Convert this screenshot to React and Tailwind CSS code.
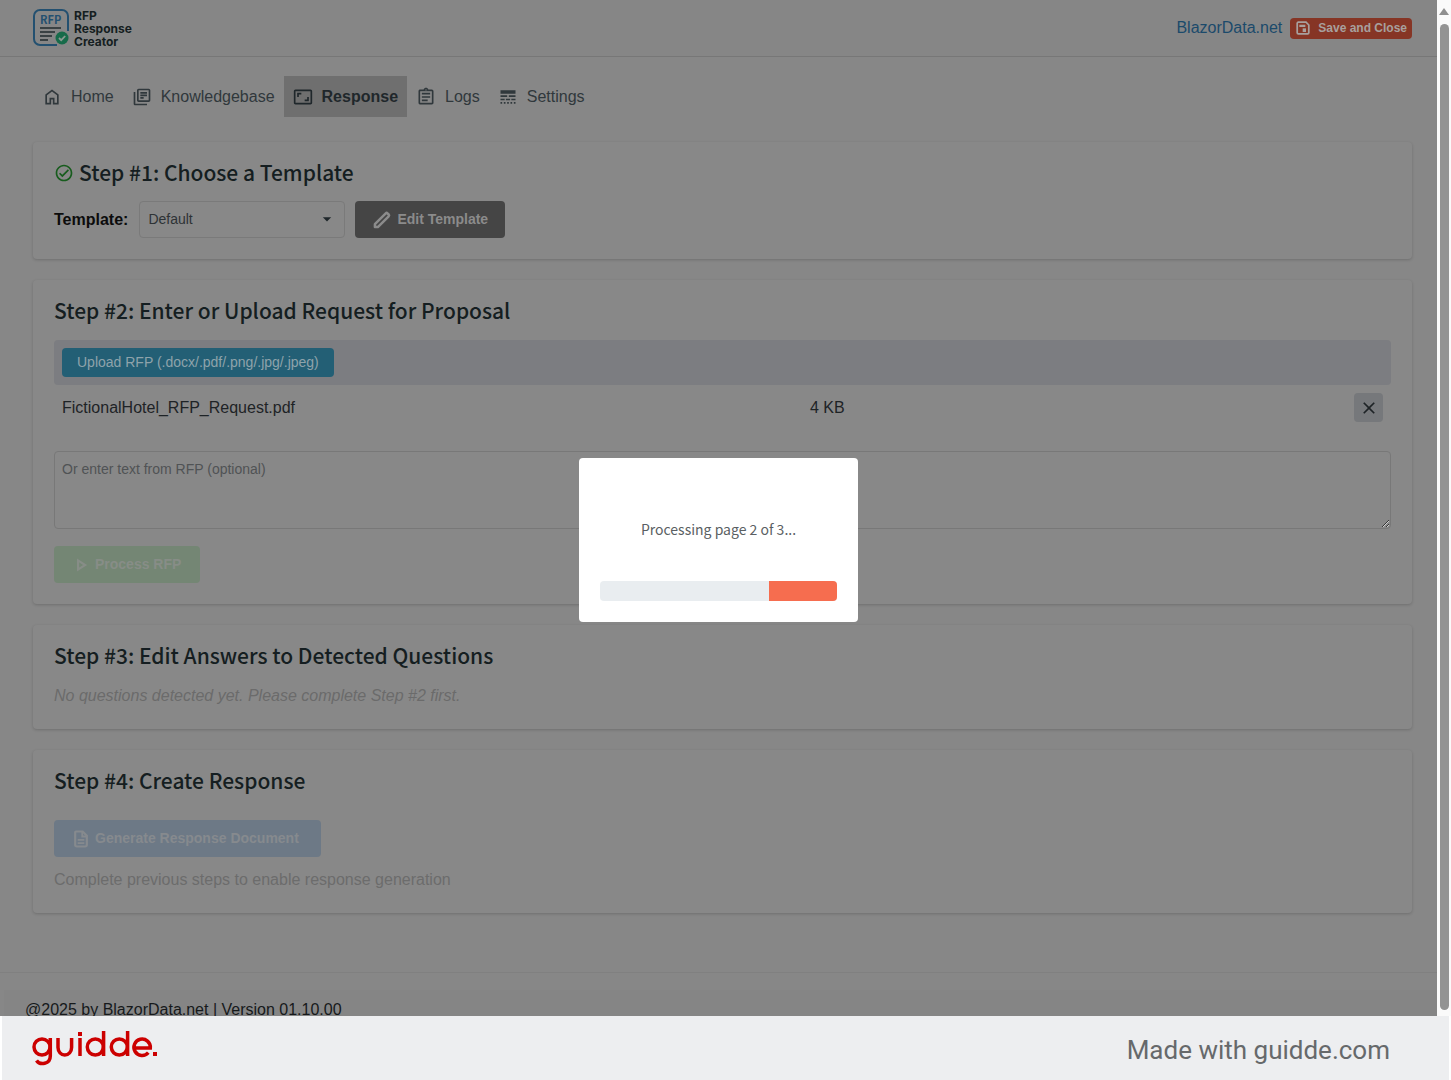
import React from 'react';
import {
    MdOutlineLibraryBooks,
    MdOutlineAspectRatio,
    MdOutlineAssignment,
    MdLineStyle,
    MdOutlineCheckCircle,
    MdClose,
    MdArrowDropDown
} from 'react-icons/md';

const HomeIcon = ({ size = 20 }) => (
    <svg width={size} height={size} viewBox="0 -960 960 960" fill="currentColor" aria-hidden="true">
        <path d="M240-200h120v-240h240v240h120v-360L480-740 240-560v360Zm-80 80v-480l320-240 320 240v480H520v-240h-80v240H160Z" />
    </svg>
);

const SaveIcon = ({ size = 16 }) => (
    <svg width={size} height={size} viewBox="0 0 24 24" fill="none" stroke="currentColor" strokeWidth="2.6" aria-hidden="true">
        <path d="M5 3.300h11.500l4.200 4.200V19a1.700 1.700 0 0 1-1.700 1.700H5A1.700 1.700 0 0 1 3.300 19V5A1.700 1.700 0 0 1 5 3.300z" />
        <path d="M6.500 8.800h9" strokeWidth="3.400" />
        <path d="M11.500 12.500h5v5.500h-5z" fill="currentColor" stroke="none" />
    </svg>
);

const PencilIcon = ({ size = 20 }) => (
    <svg width={size} height={size} viewBox="0 0 24 24" fill="none" stroke="currentColor" strokeWidth="3" strokeLinejoin="round" aria-hidden="true">
        <path d="M3.500 20.500v-3.500L16.500 4a1.500 1.500 0 0 1 2.100 0L20 5.400a1.500 1.500 0 0 1 0 2.100L7 20.500z" />
    </svg>
);

const PlayIcon = ({ size = 20 }) => (
    <svg width={size} height={size} viewBox="0 0 24 24" fill="none" stroke="currentColor" strokeWidth="2.6" aria-hidden="true">
        <path d="M8.500 6.500v11l8.500-5.500z" />
    </svg>
);

const DocumentIcon = ({ size = 20 }) => (
    <svg width={size} height={size} viewBox="0 0 24 24" fill="none" stroke="currentColor" strokeWidth="2.600" aria-hidden="true">
        <path d="M6 3h8l5 5v11a2 2 0 0 1-2 2H7a2 2 0 0 1-2-2V4a1 1 0 0 1 1-1z" />
        <path d="M13.500 3v6H19M8 13h8M8 17h8" strokeWidth="2.200" />
    </svg>
);

const navItems = [
    { name: 'Home', icon: HomeIcon },
    { name: 'Knowledgebase', icon: MdOutlineLibraryBooks },
    { name: 'Response', icon: MdOutlineAspectRatio, active: true },
    { name: 'Logs', icon: MdOutlineAssignment },
    { name: 'Settings', icon: MdLineStyle }
];

const Logo = () => (
    <a href="#home" aria-label="RFP Response Creator" className="flex items-center gap-[5px]">
        <svg width="36" height="38" viewBox="0 0 36 38" fill="none" aria-hidden="true">
            <path d="M24 36H7a6 6 0 0 1-6-6V7a6 6 0 0 1 6-6h22a6 6 0 0 1 6 6v15" stroke="#235070" strokeWidth="2" />
            <text x="7" y="15" fontSize="11" fontWeight="700" fontFamily="Noto Sans CJK SC, sans-serif" fill="#235070">RFP</text>
            <path d="M7 19h21M7 23h15M7 27h12M7 31h8" stroke="#222b2e" strokeWidth="1.6" />
            <circle cx="29" cy="29" r="6.5" fill="#176b4a" />
            <path d="m26 29 2.200 2.200 4-4.200" stroke="#8a9a92" strokeWidth="1.800" />
        </svg>
        <span className="text-[12px] leading-[13px] font-bold text-[#151e21] font-['Inter',sans-serif]">
            RFP<br />Response<br />Creator
        </span>
    </a>
);

const Card = ({ title, done, children }) => (
    <section className="rounded bg-[#888888] px-[21px] pt-[13px] pb-[21px] shadow-[0_1px_3px_rgba(0,0,0,0.18)]">
        <h2 className="flex items-center gap-[5px] text-[21px] leading-[34px] font-medium text-[#151e21] font-['Noto_Sans_CJK_SC',sans-serif]">
            {done && <MdOutlineCheckCircle size={20} className="mt-0.5 text-[#175c1d]" />}
            {title}
        </h2>
        {children}
    </section>
);

const Header = () => (
    <header className="flex h-[57px] items-center justify-between border-b border-[#777777] bg-[#868686] pr-[25px] pl-[33px]">
        <Logo />
        <div className="flex items-center gap-2">
            <a href="#blazordata" className="text-[16px] text-[#1b4a6b]">BlazorData.net</a>
            <button type="button" className="flex h-[21px] items-center gap-[7px] rounded bg-[#863525] px-[5px] text-[12px] font-bold text-[#a8a09e]">
                <SaveIcon />
                Save and Close
            </button>
        </div>
    </header>
);

const Nav = () => (
    <nav className="flex">
        {navItems.map(({ name, icon: Icon, active }) => (
            <a
                key={name}
                href={`#${name.toLowerCase()}`}
                className={`flex h-[41px] items-center gap-[9px] px-[9px] text-[16px] ${active ? 'bg-[#6f6f6f] font-bold text-[#1f272b]' : 'text-[#30383c]'}`}
            >
                <Icon size={20} />
                {name}
            </a>
        ))}
    </nav>
);

const ProgressDialog = () => (
    <div className="fixed inset-0 flex items-center justify-center pr-[14px]">
        <div role="dialog" aria-label="Progress" className="w-[279px] rounded bg-white px-[21px] pt-[59px] pb-[21px] text-center">
            <p className="text-[14px] leading-6 text-[#5a5f63] font-['Noto_Sans_CJK_SC',sans-serif]">Processing page 2 of 3...</p>
            <div className="mt-10 flex h-5 justify-end overflow-hidden rounded bg-[#e9edf0]">
                <div className="w-[68px] bg-[#f66d4f]" />
            </div>
        </div>
    </div>
);

const App = () => (
    <div className="flex h-screen flex-col overflow-hidden bg-white font-['Liberation_Sans',Arial,sans-serif]">
        <div className="flex min-h-0 flex-1">
            <div className="min-w-0 flex-1 overflow-hidden bg-[#878787]">
                <Header />
                <main className="pt-[19px] pr-[25px] pb-[59px] pl-[33px]">
                    <Nav />
                    <div className="mt-[25px] flex flex-col gap-[21px]">
                        <Card title="Step #1: Choose a Template" done>
                            <div className="mt-3 flex items-center">
                                <label htmlFor="template" className="text-[16px] font-bold text-[#0c0c0c]">Template:</label>
                                <div className="relative ml-[11px]">
                                    <select id="template" className="h-[37px] w-[206px] appearance-none rounded border border-[#7a7a7a] px-2 text-[14px] text-[#2e3336]">
                                        <option>Default</option>
                                    </select>
                                    <MdArrowDropDown size={20} className="pointer-events-none absolute top-2 right-2 text-[#1f272b]" />
                                </div>
                                <button type="button" className="ml-[10px] flex h-[37px] items-center gap-[5px] rounded bg-[#454545] px-[17px] text-[14px] font-bold text-[#8b8b8b]">
                                    <PencilIcon />
                                    Edit Template
                                </button>
                            </div>
                        </Card>

                        <Card title="Step #2: Enter or Upload Request for Proposal">
                            <div className="mt-[13px] flex h-[45px] items-center rounded bg-[#7c7d81] px-2">
                                <button type="button" className="h-[29px] rounded bg-[#235f75] px-[15px] text-[14px] text-[#8ea3ab]">
                                    Upload RFP (.docx/.pdf/.png/.jpg/.jpeg)
                                </button>
                            </div>
                            <div className="grid h-[45px] grid-cols-[1fr_573px_29px] items-center px-2 text-[16px] text-[#1e2326]">
                                <span>FictionalHotel_RFP_Request.pdf</span>
                                <span className="pl-[29px]">4 KB</span>
                                <button type="button" aria-label="Remove file" className="flex size-[29px] items-center justify-center rounded bg-[#76787b]">
                                    <MdClose size={20} />
                                </button>
                            </div>
                            <textarea
                                aria-label="RFP text"
                                placeholder="Or enter text from RFP (optional)"
                                className="mt-[21px] block h-[78px] w-full rounded border border-[#787878] px-[7px] py-[7px] text-[14px] placeholder:text-[#505355]"
                            />
                            <button type="button" disabled className="mt-[17px] flex h-[37px] items-center gap-1 rounded bg-[#748674] pr-[19px] pl-[17px] text-[14px] font-bold text-[#878d87]">
                                <PlayIcon />
                                Process RFP
                            </button>
                        </Card>

                        <Card title="Step #3: Edit Answers to Detected Questions">
                            <p className="mt-3 text-[16px] leading-6 text-[#6b6b6b] italic">No questions detected yet. Please complete Step #2 first.</p>
                        </Card>

                        <Card title="Step #4: Create Response">
                            <button type="button" disabled className="mt-[23px] flex h-[37px] items-center gap-1 rounded bg-[#6d7986] pr-[22px] pl-[17px] text-[14px] font-bold text-[#868a8e]">
                                <DocumentIcon />
                                Generate Response Document
                            </button>
                            <p className="mt-[11px] text-[16px] leading-6 text-[#6c6c6c]">Complete previous steps to enable response generation</p>
                        </Card>
                    </div>
                </main>
                <footer className="border-t border-[#808080] pt-[17px] pl-1">
                    <p className="bg-[#858585] px-[21px] py-2 text-[16px] leading-6 text-[#16191b]">@2025 by BlazorData.net | Version 01.10.00</p>
                </footer>
            </div>
            {/* Scrollbar */}
            <div className="flex w-[14px] flex-col items-center bg-[#fafafa] pt-2 pb-[6px]">
                <svg width="10" height="7" viewBox="0 0 10 7" aria-hidden="true">
                    <path d="M5 0 10 7H0z" fill="#8f8f8f" />
                </svg>
                <div className="mt-[9px] w-[9px] flex-1 rounded-full bg-[#939393]" />
            </div>
        </div>
        <div className="mx-[2px] flex h-16 items-center justify-between bg-[#edeef0] pr-[59px] pl-[29px]">
            <svg width="128" height="36" viewBox="0 0 128 36" fill="none" role="img" aria-label="guidde" className="text-[#cc0000]">
                <g stroke="currentColor" strokeWidth="3.500">
                    <circle cx="11" cy="17" r="8" />
                    <path d="M19.300 8v18c0 8.500-10.500 9.500-13.800 4.500" />
                    <path d="M27 8v9.500a6.800 7.500 0 0 0 13.600 0V8" />
                    <path d="M49 8v18" />
                    <circle cx="64.300" cy="17" r="8" />
                    <path d="M72.600 1v25" />
                    <circle cx="88.300" cy="17" r="8" />
                    <path d="M96.600 1v25" />
                    <path d="M103 18h16.300a8.200 8.200 0 1 0-2 4.700" />
                </g>
                <path d="M47 2h4v4h-4zM122 22h4v4h-4z" fill="currentColor" />
            </svg>
            <p className="pt-1 text-[26px] text-[#66696b] font-['Roboto',sans-serif]">Made with guidde.com</p>
        </div>
        <ProgressDialog />
    </div>
);

export default App;
